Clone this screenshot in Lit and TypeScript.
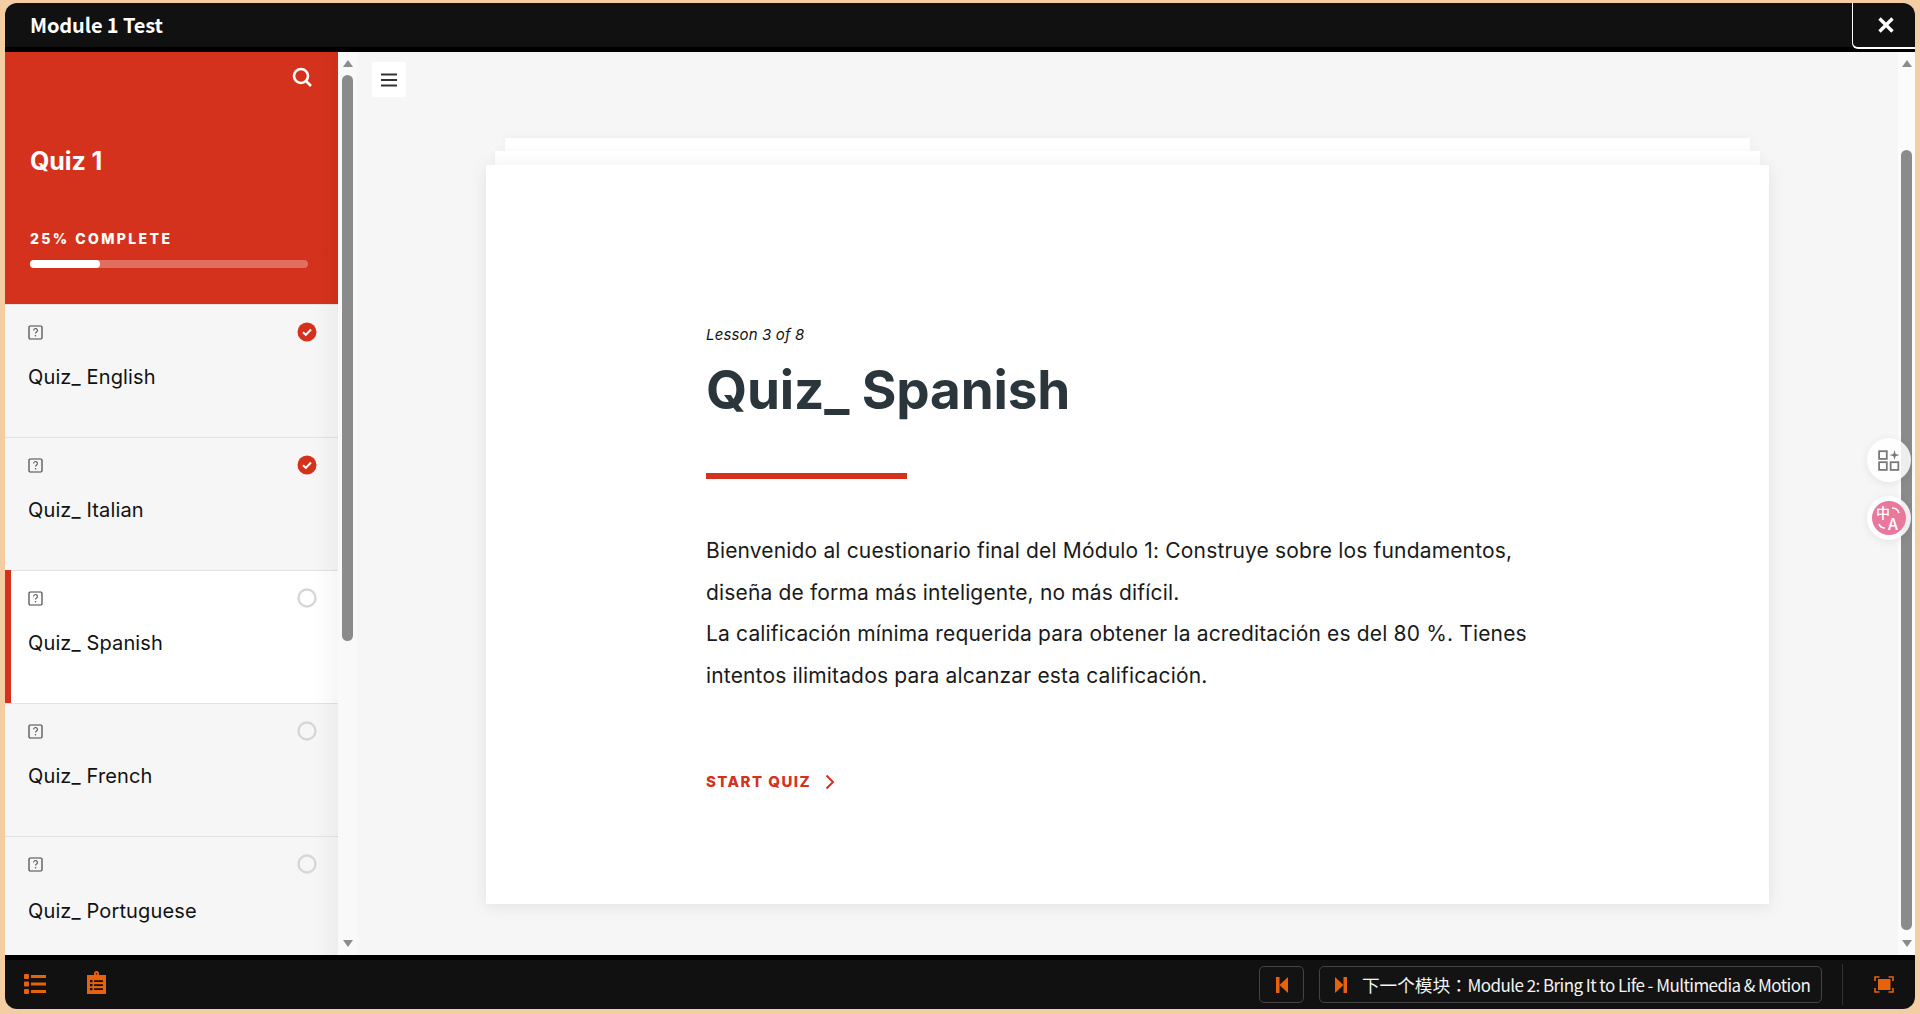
import { LitElement, html, css } from "lit";
import { customElement } from "lit/decorators.js";

const items = [
  { t: "Quiz_ English", done: true },
  { t: "Quiz_ Italian", done: true },
  { t: "Quiz_ Spanish", done: false, active: true },
  { t: "Quiz_ French", done: false },
  { t: "Quiz_ Portuguese", done: false },
];

@customElement("app-root")
export class AppRoot extends LitElement {
  static styles = css`
    :host { display: block; height: 1014px; background: #f5cda2; overflow: hidden; font-family: Inter, "Noto Sans", sans-serif; }
    * { box-sizing: border-box; }
    .win { margin: 3px 5px 0; height: 1006px; border-radius: 12px; overflow: hidden; display: flex; flex-direction: column; background: #f6f6f6; position: relative; }
    .top { height: 49px; flex: none; background: #111; border-bottom: 5px solid #000; display: flex; align-items: flex-start; justify-content: space-between; font-family: "Noto Sans CJK SC", sans-serif; }
    .top-title { color: #fff; font-weight: 700; font-size: 20px; line-height: 44px; padding-left: 25px; letter-spacing: -.12px; }
    .close { width: 63px; height: 46px; padding-left: 3px; border-left: 1px solid #fff; border-bottom: 2px solid #fff; border-bottom-left-radius: 6px; display: flex; align-items: center; justify-content: center; }
    .body { flex: 1; min-height: 0; display: flex; }
    .side { width: 333px; flex: none; display: flex; flex-direction: column; overflow: hidden; background: #f6f6f6; position: relative; }
    .side::after { content: ""; position: absolute; inset: 0 0 0 auto; width: 24px; background: linear-gradient(to right, rgba(0,0,0,0), rgba(0,0,0,.035)); pointer-events: none; }
    .hero { height: 252px; flex: none; background: #d4321c; color: #fff; padding: 0 30px 0 25px; display: flex; flex-direction: column; }
    .hero-search { align-self: flex-end; margin: 14px -5px 0 0; height: 22px; }
    .hero-title { font-size: 25px; font-weight: 700; line-height: 32px; margin-top: 57px; letter-spacing: -.1px; }
    .hero-pct { font-size: 14px; font-weight: 800; letter-spacing: 2.4px; line-height: 18px; margin-top: 53px; }
    .bar { height: 8px; width: 278px; border-radius: 4px; background: rgba(255,255,255,.3); margin-top: 12px; }
    .bar i { display: block; height: 100%; width: 25%; background: #fff; border-radius: 4px; }
    .item { height: 133px; flex: none; padding: 18px 21.5px 0 23px; background: #f6f6f6; color: #111; }
    .item:not(:first-of-type) { box-shadow: inset 0 1px 0 #e2e2e2; }
    .item.active { background: #fff; border-left: 6px solid #d4321c; padding-left: 17px; }
    .row { display: flex; justify-content: space-between; align-items: center; height: 20px; }
    .name { font-size: 20px; line-height: 28px; margin-top: 21px; letter-spacing: .13px; }
    .item:last-child .name { margin-top: 23px; }
    .sb { width: 19px; flex: none; display: flex; flex-direction: column; align-items: center; background: #f9f9f9; }
    .main-sb { width: 17px; background: #fbfbfb; }
    .arrow-up { width: 0; height: 0; border: 5px solid transparent; border-top: 0; border-bottom: 7px solid #8c8c8c; margin-top: 8px; }
    .arrow-down { width: 0; height: 0; border: 5px solid transparent; border-bottom: 0; border-top: 7px solid #8c8c8c; margin-bottom: 8px; margin-top: auto; }
    .thumb { width: 11px; background: #8b8b8b; border-radius: 6px; }
    .sb .thumb { height: 566px; margin-top: 8px; }
    .main-sb .thumb { height: 780px; margin-top: 83px; }
    .main { flex: 1; min-width: 0; background: #f6f6f6; padding: 10px 15px 0; overflow: hidden; }
    .menu { width: 34px; height: 35px; background: #fff; border-radius: 2px; display: flex; align-items: center; justify-content: center; }
    .stack { width: 1283px; margin: 41px auto 0; }
    .l1, .l2 { background: #fff; box-shadow: 0 -1px 8px rgba(0,0,0,.035); }
    .l1 { height: 13px; margin: 0 19px; }
    .l2 { height: 14px; margin: 0 9px; }
    .card { height: 739px; background: #fff; box-shadow: 0 2px 16px rgba(0,0,0,.09); padding: 160px 220px 0; color: #111; }
    .lesson { font-size: 15px; font-style: italic; line-height: 20px; letter-spacing: .15px; }
    h1 { margin: 10px 0 0; font-size: 53px; line-height: 70px; font-weight: 700; color: #2a363b; letter-spacing: -.15px; }
    .rule { width: 201px; height: 6px; background: #d4321c; margin-top: 48px; }
    .copy { margin-top: 51px; font-size: 21px; line-height: 41.5px; color: #1a1a1a; width: 843px; letter-spacing: .16px; }
    .start { display: flex; align-items: center; gap: 14px; margin-top: 76px; font-size: 15px; line-height: 20px; font-weight: 800; letter-spacing: 1.45px; color: #d4321c; }
    .foot { height: 54px; flex: none; background: #111; border-top: 5px solid #000; display: flex; align-items: center; padding: 0 0 0 19px; font-family: "Noto Sans CJK SC", sans-serif; }
    .foot .clip { margin: 0 0 5px 41px; }
    .btn { height: 37px; border: 1px solid #444; border-radius: 5px; display: flex; align-items: center; justify-content: center; background: #131313; }
    .prev { margin-left: auto; width: 45px; }
    .next { width: 503px; margin-left: 15px; padding-left: 15px; gap: 15px; justify-content: flex-start; color: #f4f4f4; white-space: nowrap; }
    .zh { font-size: 17.6px; font-family: "Noto Sans CJK TC", sans-serif; }
    .en { font-size: 17px; letter-spacing: -.56px; }
    .div { width: 1px; height: 41px; background: #333; margin-left: 20px; }
    .full { margin: 0 21px 0 31px; display: flex; }
    .float { position: absolute; right: 4px; width: 44px; height: 44px; border-radius: 50%; background: rgba(255,255,255,.85); box-shadow: 0 2px 10px rgba(0,0,0,.08); display: flex; align-items: center; justify-content: center; }
    .f1 { top: 435px; }
    .f2 { top: 493px; }
    .tr { width: 34px; height: 34px; border-radius: 50%; background: #e9799c; color: #fff; position: relative; font-family: "Noto Sans CJK SC", sans-serif; line-height: 1; }
    .tr b { position: absolute; font-weight: 500; }
    .tr .c { left: 4px; top: 4px; font-size: 14px; }
    .tr .a { left: 16px; top: 14px; font-size: 16px; }
    .tr svg { position: absolute; inset: 0; }
  `;

  qbox() {
    return html`<svg width="15" height="15" viewBox="0 0 15 15" fill="none"><rect x="1" y="1" width="13" height="13" rx="1.2" stroke="#444" stroke-width="1.2"/><path d="M5.6 5.5a1.9 1.9 0 1 1 3 1.500c-.7.5-1.100.8-1.100 1.600" stroke="#555" stroke-width="1.100"/><circle cx="7.500" cy="10.800" r=".75" fill="#555"/></svg>`;
  }
  status(done: boolean) {
    return done
      ? html`<svg width="20" height="20" viewBox="0 0 20 20"><circle cx="10" cy="10" r="9.5" fill="#d4321c"/><path d="M6 10.300l2.800 2.600L14 7.600" fill="none" stroke="#fff" stroke-width="2.100"/></svg>`
      : html`<svg width="20" height="20" viewBox="0 0 20 20"><circle cx="10" cy="10" r="8.500" fill="none" stroke="#d6d6d6" stroke-width="2.400"/></svg>`;
  }

  render() {
    return html`<div class="win">
      <div class="top">
        <div class="top-title">Module 1 Test</div>
        <div class="close"><svg width="20" height="20" viewBox="0 0 20 20"><path d="M3.500 3.500l13 13M16.500 3.500l-13 13" stroke="#fff" stroke-width="3.400"/></svg></div>
      </div>
      <div class="body">
        <div class="side">
          <div class="hero">
            <div class="hero-search"><svg width="22" height="22" viewBox="0 0 22 22" fill="none"><circle cx="10" cy="10" r="7" stroke="#fff" stroke-width="2.600"/><path d="M15 15l5 5" stroke="#fff" stroke-width="2.600"/></svg></div>
            <div class="hero-title">Quiz 1</div>
            <div class="hero-pct">25% COMPLETE</div>
            <div class="bar"><i></i></div>
          </div>
          ${items.map(
            (it) => html`<div class="item ${it.active ? "active" : ""}">
              <div class="row">${this.qbox()}${this.status(it.done)}</div>
              <div class="name">${it.t}</div>
            </div>`
          )}
        </div>
        <div class="sb"><div class="arrow-up"></div><div class="thumb"></div><div class="arrow-down"></div></div>
        <div class="main">
          <div class="menu"><svg width="16" height="14" viewBox="0 0 16 14"><path d="M0 1.500h16M0 7h16M0 12.500h16" stroke="#333" stroke-width="1.800"/></svg></div>
          <div class="stack">
            <div class="l1"></div>
            <div class="l2"></div>
            <div class="card">
              <div class="lesson">Lesson 3 of 8</div>
              <h1>Quiz_ Spanish</h1>
              <div class="rule"></div>
              <div class="copy">Bienvenido al cuestionario final del Módulo 1: Construye sobre los fundamentos, diseña de forma más inteligente, no más difícil.<br />La calificación mínima requerida para obtener la acreditación es del 80 %. Tienes intentos ilimitados para alcanzar esta calificación.</div>
              <div class="start">START QUIZ <svg width="10" height="16" viewBox="0 0 10 16" fill="none"><path d="M1.500 1.500L8 8l-6.500 6.500" stroke="#d4321c" stroke-width="2"/></svg></div>
            </div>
          </div>
        </div>
        <div class="sb main-sb"><div class="arrow-up"></div><div class="thumb"></div><div class="arrow-down"></div></div>
      </div>
      <div class="foot">
        <svg width="22" height="21" viewBox="0 0 22 21" fill="#e8610c"><rect x="0" y="0" width="5" height="5" rx="1"/><rect x="0" y="7.500" width="5" height="5" rx="1"/><rect x="0" y="15" width="5" height="5" rx="1"/><rect x="7" y="1" width="15" height="3" /><rect x="7" y="8.500" width="15" height="3"/><rect x="7" y="16" width="15" height="3"/></svg>
        <svg class="clip" width="19" height="23" viewBox="0 0 19 23"><path fill="#e8610c" fill-rule="evenodd" d="M7 2.500a2.500 2.500 0 0 1 5 0V4h7v19H0V4h7zM8.700 2.800a.8.800 0 1 0 1.600 0 .8.800 0 0 0-1.600 0zM3 9v2.200h2.500V9zM7 9.300v1.600h9V9.300zM3 13v2.200h2.500V13zM7 13.300v1.600h9V13.300zM3 17v2.200h2.500V17zM7 17.300v1.600h9V17.300z"/></svg>
        <div class="btn prev"><svg width="12" height="16" viewBox="0 0 12 16" fill="#e8610c"><rect x="0" y="0" width="3.500" height="16"/><path d="M12 0v16L3.500 8z"/></svg></div>
        <div class="btn next"><svg width="12" height="16" viewBox="0 0 12 16" fill="#e8610c"><rect x="8.500" y="0" width="3.500" height="16"/><path d="M0 0v16l8.500-8z"/></svg><span><span class="zh">下一个模块：</span><span class="en">Module 2: Bring It to Life - Multimedia &amp; Motion</span></span></div>
        <div class="div"></div>
        <div class="full"><svg width="20" height="17" viewBox="0 0 20 17" fill="none"><path d="M1 5V1h4.500M14.500 1H19v4M19 12v4h-4.500M5.500 16H1v-4" stroke="#e8610c" stroke-width="1.600"/><rect x="4" y="3" width="12.500" height="11" fill="#e8610c"/></svg></div>
      </div>
      <div class="float f1"><svg width="22" height="22" viewBox="0 0 20 20" fill="none"><rect x="1" y="2" width="7" height="7" stroke="#777" stroke-width="1.600"/><rect x="1" y="12" width="7" height="7" stroke="#777" stroke-width="1.600"/><rect x="11.500" y="12" width="7" height="7" stroke="#777" stroke-width="1.600"/><path d="M15 1l1 3.500 3.500 1-3.500 1L15 10l-1-3.500-3.500-1 3.500-1z" fill="#777"/></svg></div>
      <div class="float f2"><div class="tr"><b class="c">中</b><b class="a">A</b><svg width="34" height="34" viewBox="0 0 34 34" fill="none"><path d="M20 7c4 0 6 2 7 5M7 23c1 3 3 4 6 4" stroke="#fff" stroke-width="1.600"/></svg></div></div>
    </div>`;
  }
}
